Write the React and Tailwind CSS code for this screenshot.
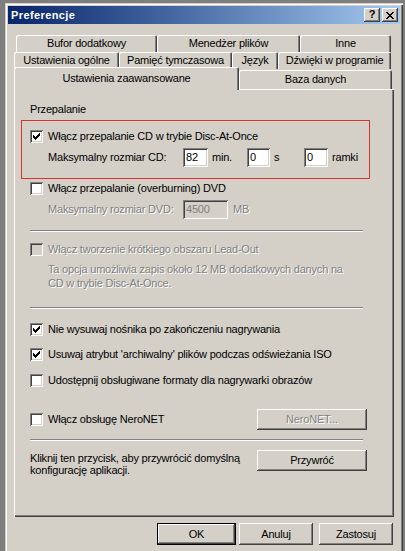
import React from "react";

const raised = "shadow-[inset_-1px_-1px_#404040,inset_1px_1px_#ffffff,inset_-2px_-2px_#808080]";
const sunken = "shadow-[inset_1px_1px_#808080,inset_-1px_-1px_#ffffff,inset_2px_2px_#404040,inset_-2px_-2px_#d4d0c8]";
const dim = "text-[#808080] [text-shadow:1px_1px_0_#ffffff]";
const tabEdge = "rounded-t-[2px] shadow-[inset_1px_1px_#ffffff,inset_-1px_0_#404040,inset_-2px_0_#808080]";

const Check = ({checked, disabled}) => (
    <span className={`w-[13px] h-[13px] shrink-0 flex items-center justify-center ${sunken} ${disabled ? "bg-[#d4d0c8]" : "bg-white"}`}>
        {checked && (
            <svg width="7" height="7" viewBox="0 0 7 7" shapeRendering="crispEdges" fill="#000">
                <rect x="6" y="0" width="1" height="1"/>
                <rect x="5" y="1" width="2" height="1"/>
                <rect x="0" y="2" width="1" height="1"/>
                <rect x="4" y="2" width="3" height="1"/>
                <rect x="0" y="3" width="2" height="1"/>
                <rect x="3" y="3" width="3" height="1"/>
                <rect x="0" y="4" width="5" height="1"/>
                <rect x="1" y="5" width="3" height="1"/>
                <rect x="2" y="6" width="1" height="1"/>
            </svg>
        )}
    </span>
);

const Field = ({className, value, disabled}) => (
    <span className={`h-[19px] shrink-0 flex items-center pl-[3px] ${sunken} ${disabled ? "bg-[#d4d0c8] text-[#808080]" : "bg-white"} ${className}`}>
        {value}
    </span>
);

const Btn = ({className, children, disabled}) => (
    <div className={`flex items-center justify-center bg-[#d4d0c8] ${raised} ${disabled ? dim : ""} ${className}`}>
        {children}
    </div>
);

const Tab = ({className, children}) => (
    <div className={`flex items-center justify-center ${tabEdge} ${className}`}>{children}</div>
);

const Row = ({checked, disabled, children, className = ""}) => (
    <div className={`flex items-center gap-[5px] h-[13px] ${className}`}>
        <Check checked={checked} disabled={disabled}/>
        <span className={disabled ? dim : ""}>{children}</span>
    </div>
);

const Sep = ({className}) => (
    <div className={`w-[333px] h-[2px] border-t border-t-[#808080] border-b border-b-white ${className}`}/>
);

export default function App() {
    return (
        <div className="w-[405px] h-[551px] overflow-hidden bg-[#7e7e7e] pl-[5px] pt-[3px] font-['Liberation_Sans',Arial,sans-serif] text-[11px] leading-[13px] tracking-[-0.2px] text-black">
            <div className="w-[398px] h-[560px] bg-[#d4d0c8] p-[3px] shadow-[inset_1px_1px_#d4d0c8,inset_2px_2px_#ffffff,inset_-1px_0_#404040,inset_-2px_0_#808080] flex flex-col">
                {/* title bar */}
                <div className="h-[18px] shrink-0 flex items-center bg-gradient-to-r from-[#0a246a] to-[#a6caf0] pl-[3px] pr-[2px]">
                    <span className="text-white font-bold tracking-[0.4px] flex-1">Preferencje</span>
                    <Btn className="w-[16px] h-[14px] font-bold text-[11px] leading-none pb-[1px]">?</Btn>
                    <Btn className="w-[16px] h-[14px] ml-[2px]">
                        <svg width="8" height="7" viewBox="0 0 8 7" shapeRendering="crispEdges" fill="#000">
                            <rect x="0" y="0" width="2" height="1"/>
                            <rect x="6" y="0" width="2" height="1"/>
                            <rect x="1" y="1" width="2" height="1"/>
                            <rect x="5" y="1" width="2" height="1"/>
                            <rect x="2" y="2" width="4" height="1"/>
                            <rect x="3" y="3" width="2" height="1"/>
                            <rect x="2" y="4" width="4" height="1"/>
                            <rect x="1" y="5" width="2" height="1"/>
                            <rect x="5" y="5" width="2" height="1"/>
                            <rect x="0" y="6" width="2" height="1"/>
                            <rect x="6" y="6" width="2" height="1"/>
                        </svg>
                    </Btn>
                </div>

                {/* tabs */}
                <div className="mt-[11px] ml-[8px] h-[17px] flex shrink-0">
                    <Tab className="w-[141px]">Bufor dodatkowy</Tab>
                    <Tab className="w-[143px]">Menedżer plików</Tab>
                    <Tab className="w-[91px]">Inne</Tab>
                </div>
                <div className="ml-[6px] h-[17px] flex shrink-0">
                    <Tab className="w-[105px]">Ustawienia ogólne</Tab>
                    <Tab className="w-[113px]">Pamięć tymczasowa</Tab>
                    <Tab className="w-[46px]">Język</Tab>
                    <Tab className="w-[113px]">Dźwięki w programie</Tab>
                </div>
                <div className="ml-[6px] h-[20px] flex shrink-0">
                    <div className={`w-[225px] h-[23px] -mt-[2px] self-start relative z-10 bg-[#d4d0c8] flex items-center justify-center ${tabEdge}`}>
                        Ustawienia zaawansowane
                    </div>
                    <Tab className="w-[153px] mt-[1px]">Baza danych</Tab>
                </div>

                {/* panel */}
                <div className="ml-[6px] w-[380px] h-[428px] shrink-0 shadow-[inset_1px_1px_#ffffff,inset_-1px_-1px_#404040,inset_-2px_-2px_#808080] pl-[16px] pt-[14px] flex flex-col items-start">
                    <div>Przepalanie</div>

                    <div className="mt-[4px] -ml-[9px] w-[349px] border-solid border-[1px] border-[color:#de2f2f] pl-[8px] pt-[9px] pb-[11px]">
                        <Row checked>Włącz przepalanie CD w trybie Disc-At-Once</Row>
                        <div className="mt-[5px] pl-[18px] h-[19px] flex items-center">
                            <span className="w-[135px] shrink-0">Maksymalny rozmiar CD:</span>
                            <Field className="w-[25px]" value="82"/>
                            <span className="ml-[4px] w-[35px] shrink-0">min.</span>
                            <Field className="w-[23px]" value="0"/>
                            <span className="ml-[4px] w-[30px] shrink-0">s</span>
                            <Field className="w-[24px]" value="0"/>
                            <span className="ml-[4px]">ramki</span>
                        </div>
                    </div>

                    <Row className="mt-[3px]">Włącz przepalanie (overburning) DVD</Row>
                    <div className="mt-[5px] pl-[18px] h-[19px] flex items-center">
                        <span className={`w-[135px] shrink-0 ${dim}`}>Maksymalny rozmiar DVD:</span>
                        <Field className="w-[45px]" value="4500" disabled/>
                        <span className={`ml-[5px] ${dim}`}>MB</span>
                    </div>

                    <Sep className="mt-[11px]"/>
                    <Row className="mt-[11px]" disabled>Włącz tworzenie krótkiego obszaru Lead-Out</Row>
                    <div className={`mt-[6px] pl-[18px] leading-[14px] ${dim}`}>
                        Ta opcja umożliwia zapis około 12 MB dodatkowych danych na<br/>
                        CD w trybie Disc-At-Once.
                    </div>

                    <Sep className="mt-[17px]"/>
                    <Row className="mt-[14px]" checked>Nie wysuwaj nośnika po zakończeniu nagrywania</Row>
                    <Row className="mt-[12px]" checked>Usuwaj atrybut 'archiwalny' plików podczas odświeżania ISO</Row>
                    <Row className="mt-[13px]">Udostępnij obsługiwane formaty dla nagrywarki obrazów</Row>

                    <div className="mt-[22px] w-[337px] h-[21px] flex items-center justify-between">
                        <Row>Włącz obsługę NeroNET</Row>
                        <Btn className="w-[110px] h-[21px]" disabled>NeroNET...</Btn>
                    </div>

                    <Sep className="mt-[9px]"/>
                    <div className="mt-[9px] w-[337px] flex items-start justify-between">
                        <div className="pt-[2px] leading-[12px]">
                            Kliknij ten przycisk, aby przywrócić domyślną<br/>
                            konfigurację aplikacji.
                        </div>
                        <Btn className="w-[110px] h-[21px]">Przywróć</Btn>
                    </div>
                </div>

                {/* dialog buttons */}
                <div className="mt-[6px] h-[22px] flex shrink-0">
                    <div className="ml-[149px] w-[79px] h-[22px] border border-black">
                        <Btn className="w-full h-full">OK</Btn>
                    </div>
                    <Btn className="ml-[3px] w-[74px] h-[22px]">Anuluj</Btn>
                    <Btn className="ml-[6px] w-[74px] h-[22px]">Zastosuj</Btn>
                </div>
            </div>
        </div>
    );
}
